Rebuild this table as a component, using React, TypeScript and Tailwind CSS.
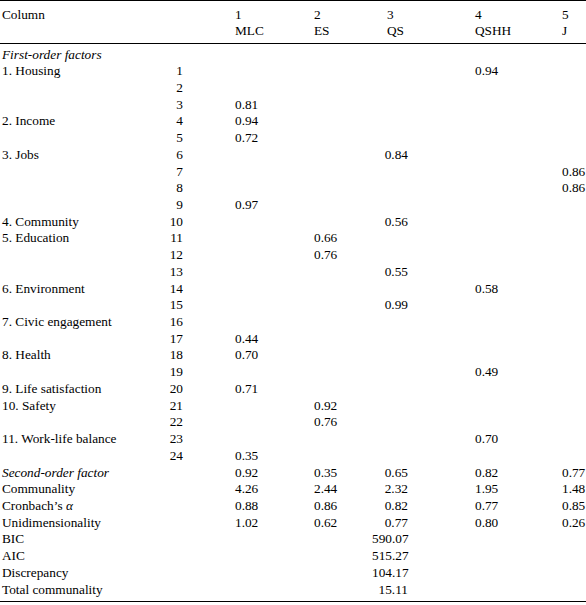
import React from "react";

type Row = {
  label: string;
  italic?: boolean;
  item?: string;
  // MLC, ES, QS, QSHH, J
  v: (string | null)[];
};

const e = [null, null, null, null, null];

const rows: Row[] = [
  { label: "First-order factors", italic: true, v: e },
  { label: "1. Housing", item: "1", v: [null, null, null, "0.94", null] },
  { label: "", item: "2", v: e },
  { label: "", item: "3", v: ["0.81", null, null, null, null] },
  { label: "2. Income", item: "4", v: ["0.94", null, null, null, null] },
  { label: "", item: "5", v: ["0.72", null, null, null, null] },
  { label: "3. Jobs", item: "6", v: [null, null, "0.84", null, null] },
  { label: "", item: "7", v: [null, null, null, null, "0.86"] },
  { label: "", item: "8", v: [null, null, null, null, "0.86"] },
  { label: "", item: "9", v: ["0.97", null, null, null, null] },
  { label: "4. Community", item: "10", v: [null, null, "0.56", null, null] },
  { label: "5. Education", item: "11", v: [null, "0.66", null, null, null] },
  { label: "", item: "12", v: [null, "0.76", null, null, null] },
  { label: "", item: "13", v: [null, null, "0.55", null, null] },
  { label: "6. Environment", item: "14", v: [null, null, null, "0.58", null] },
  { label: "", item: "15", v: [null, null, "0.99", null, null] },
  { label: "7. Civic engagement", item: "16", v: e },
  { label: "", item: "17", v: ["0.44", null, null, null, null] },
  { label: "8. Health", item: "18", v: ["0.70", null, null, null, null] },
  { label: "", item: "19", v: [null, null, null, "0.49", null] },
  { label: "9. Life satisfaction", item: "20", v: ["0.71", null, null, null, null] },
  { label: "10. Safety", item: "21", v: [null, "0.92", null, null, null] },
  { label: "", item: "22", v: [null, "0.76", null, null, null] },
  { label: "11. Work-life balance", item: "23", v: [null, null, null, "0.70", null] },
  { label: "", item: "24", v: ["0.35", null, null, null, null] },
  { label: "Second-order factor", italic: true, v: ["0.92", "0.35", "0.65", "0.82", "0.77"] },
  { label: "Communality", v: ["4.26", "2.44", "2.32", "1.95", "1.48"] },
  { label: "Cronbach", v: ["0.88", "0.86", "0.82", "0.77", "0.85"] },
  { label: "Unidimensionality", v: ["1.02", "0.62", "0.77", "0.80", "0.26"] },
  { label: "BIC", v: [null, null, "590.07", null, null] },
  { label: "AIC", v: [null, null, "515.27", null, null] },
  { label: "Discrepancy", v: [null, null, "104.17", null, null] },
  { label: "Total communality", v: [null, null, "15.11", null, null] },
];

const App = () => {
  return (
    <div className="w-[586px] h-[605px] bg-white text-black font-['Liberation_Serif',serif] text-[13.3px] leading-[16.72px]">
      {/* header */}
      <div className="flex border-t border-b border-black pt-[5.5px] pb-[3px]">
        <div className="w-[150px] pl-[2px]">Column</div>
        <div className="w-[33px]"></div>
        <div className="w-[131px] pl-[52px]">
          <div>1</div>
          <div>MLC</div>
        </div>
        <div className="w-[73px]">
          <div>2</div>
          <div>ES</div>
        </div>
        <div className="w-[21px]">
          <div>3</div>
          <div>QS</div>
        </div>
        <div className="w-[154px] pl-[67px]">
          <div>4</div>
          <div>QSHH</div>
        </div>
        <div className="w-[24px]">
          <div>5</div>
          <div>J</div>
        </div>
      </div>

      {/* body */}
      <div className="border-b border-black pt-[2.6px] pb-[3px]">
        {rows.map((r, i) => (
          <div key={i} className="flex h-[16.72px] whitespace-nowrap">
            <div className={"w-[150px] pl-[2px]" + (r.italic ? " italic" : "")}>
              {r.label === "Cronbach" ? (
                <>
                  Cronbach’s <span className="italic">α</span>
                </>
              ) : (
                r.label
              )}
            </div>
            <div className="w-[33px] text-right">{r.item}</div>
            <div className="w-[131px] pl-[52px]">{r.v[0]}</div>
            <div className="w-[58px]">{r.v[1]}</div>
            <div className="w-[36px] text-right">{r.v[2]}</div>
            <div className="w-[154px] pl-[67px]">{r.v[3]}</div>
            <div className="w-[24px]">{r.v[4]}</div>
          </div>
        ))}
      </div>
    </div>
  );
};

export default App;
